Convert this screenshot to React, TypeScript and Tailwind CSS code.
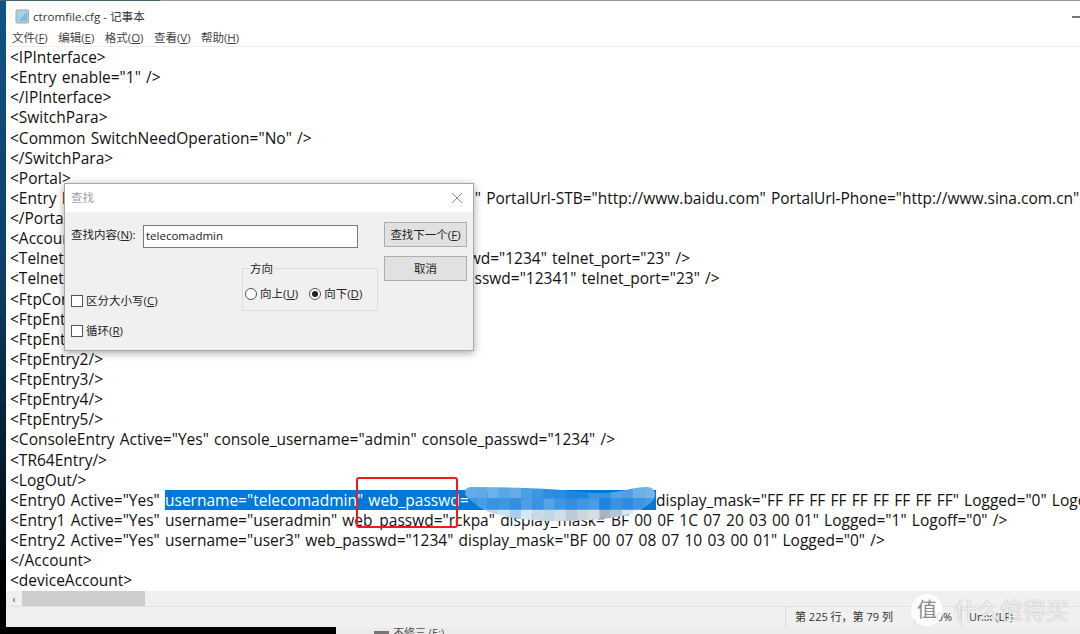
const rows = [
  '<IPInterface>',
  '<Entry enable="1" />',
  '</IPInterface>',
  '<SwitchPara>',
  '<Common SwitchNeedOperation="No" />',
  '</SwitchPara>',
  '<Portal>',
  '<Entry Enable="1" PortalUrl-Computer="http://www.sina.com.cn" PortalUrl-STB="http://www.baidu.com" PortalUrl-Phone="http://www.sina.com.cn" />',
  '</Portal>',
  '<Account>',
  '<TelnetEntry Active="Yes" telnet_username="roots" telnet_passwd="1234" telnet_port="23" />',
  '<TelnetEntry1 Active="Yes" telnet_username="user12" telnet_passwd="12341" telnet_port="23" />',
  '<FtpConfig />',
  '<FtpEntry0 />',
  '<FtpEntry1 />',
  '<FtpEntry2/>',
  '<FtpEntry3/>',
  '<FtpEntry4/>',
  '<FtpEntry5/>',
  '<ConsoleEntry Active="Yes" console_username="admin" console_passwd="1234" />',
  '<TR64Entry/>',
  '<LogOut/>',
];

// 打码的马赛克色块，每格 11px
const mosaic = [
  ['#63ace7', '#5fa9e6', '#6cb1e9', '#5aa7e6', '#66ade8', '#4c9fe5', '#3f97e3', '#2d8de0', '#2a8be0', '#1f84de', '#1f84de', '#3e96e3', '#3a93e2', '#55a3e6', '#4f9fe5', '#6db0e8', '#74b4e9'],
  ['#3d96e3', '#4a9de4', '#3a93e2', '#3f97e3', '#348fe1', '#4d9fe5', '#3a93e2', '#55a4e6', '#3f97e3', '#348fe1', '#3f97e3', '#4a9ce4', '#1f84de', '#3a93e2', '#2d8de0', '#3e96e3', '#4a9de4'],
  ['#e4eff8', '#c4dcf0', '#bcd8ef', '#cfe3f3', '#a9cdec', '#d5e6f5', '#c9d9e6', '#c2d5e4', '#d0dce6', '#bccad6', '#cad6e0', '#d6dfe7', '#a9b4c2', '#b2c6d8', '#dbe6ef', '#eef3f7', '#f8fafc'],
];

const Menu = ({ label, k }: { label: string; k: string }) => (
  <span>
    {label}(<span className="underline">{k}</span>)
  </span>
);

function FindDialog() {
  return (
    <div className="absolute left-[64px] top-[183px] flex h-[168px] w-[410px] flex-col border border-[#a8a8a8] bg-[#f0f0f0] text-[11.5px] text-[#222] shadow-[0_2px_8px_rgba(0,0,0,0.35)]">
      <div className="flex h-[28px] items-center justify-between bg-white pl-[6px] pr-[10px] text-[#a0a0a0]">
        <span>查找</span>
        <svg width="12" height="12" viewBox="0 0 12 12" stroke="#8c8c8c" strokeWidth="1">
          <path d="M1 1l10 10M11 1L1 11" />
        </svg>
      </div>
      <div className="relative flex-1">
        <span className="absolute left-[6px] top-[14px]">
          查找内容(<span className="underline">N</span>):
        </span>
        <div className="absolute left-[78px] top-[13px] flex h-[23px] w-[215px] items-center border border-[#7a7a7a] bg-white px-[2px] pb-[2px]">
          telecomadmin
        </div>
        <button className="absolute left-[319px] top-[10px] h-[25px] w-[83px] border border-[#adadad] bg-[#e1e1e1]">
          查找下一个(<span className="underline">F</span>)
        </button>
        <button className="absolute left-[319px] top-[44px] h-[25px] w-[83px] border border-[#adadad] bg-[#e1e1e1]">
          取消
        </button>
        <fieldset className="absolute left-[177px] top-[56px] h-[43px] w-[136px] border border-[#dcdcdc]" />
        <span className="absolute left-[184px] top-[48px] bg-[#f0f0f0] px-[1px]">方向</span>
        <div className="absolute left-[180px] top-[73px] flex items-center gap-[3px]">
          <span className="h-[12px] w-[12px] rounded-full border border-[#555] bg-white" />
          <span>
            向上(<span className="underline">U</span>)
          </span>
          <span className="ml-[8px] flex h-[12px] w-[12px] items-center justify-center rounded-full border border-[#555] bg-white">
            <span className="h-[6px] w-[6px] rounded-full bg-[#222]" />
          </span>
          <span>
            向下(<span className="underline">D</span>)
          </span>
        </div>
        <div className="absolute left-[6px] top-[80px] flex items-center gap-[3px]">
          <span className="h-[12px] w-[12px] border border-[#555] bg-white" />
          <span>
            区分大小写(<span className="underline">C</span>)
          </span>
        </div>
        <div className="absolute left-[6px] top-[110px] flex items-center gap-[3px]">
          <span className="h-[12px] w-[12px] border border-[#555] bg-white" />
          <span>
            循环(<span className="underline">R</span>)
          </span>
        </div>
      </div>
    </div>
  );
}

export default function App() {
  return (
    <div className="relative flex h-[634px] w-[1080px] overflow-hidden bg-black font-['Open_Sans','Noto_Sans_CJK_SC',sans-serif]">
      <div className="h-[560px] w-[6px] shrink-0 bg-gradient-to-b from-[#0f5488] via-[#0c3f66] to-[#020a10]" />
      <div className="flex h-[627px] min-w-0 flex-1 flex-col border-t border-[#999] bg-white">
        <div className="flex h-[29px] shrink-0 items-center gap-[3px] pl-[9px] pt-[2px] text-[11.6px] text-[#333]">
          <svg width="15" height="15" viewBox="0 0 15 15">
            <rect x="1" y="1" width="12.5" height="13" rx="1" fill="#a3d2e4" stroke="#a5a5a5" />
            <path d="M3 12L12 3v9z" fill="#7fbcd6" />
          </svg>
          <span>ctromfile.cfg - 记事本</span>
          <div className="ml-auto h-[2px] w-[8px] bg-[#777]" />
        </div>
        <div className="flex h-[17px] shrink-0 items-center gap-[10.4px] border-b border-[#eee] pl-[6px] text-[11.5px] text-[#444]">
          <Menu label="文件" k="F" />
          <Menu label="编辑" k="E" />
          <Menu label="格式" k="O" />
          <Menu label="查看" k="V" />
          <Menu label="帮助" k="H" />
        </div>
        <div className="min-h-0 flex-1 overflow-hidden whitespace-nowrap pl-[4px] text-[15.5px] leading-[20.13px] text-[#111] [word-spacing:1.2px]">
          {rows.map((r) => (
            <div key={r} className="h-[20.13px]">{r}</div>
          ))}
          <div className="h-[20.13px]">
            {'<Entry0 Active="Yes" '}
            <span className="inline-block w-[491px] overflow-hidden bg-[#0078d7] align-top text-white">{'username="telecomadmin" web_passwd="'}</span>
            {'display_mask="FF FF FF FF FF FF FF FF FF" Logged="0" Logoff="0" />'}
          </div>
          <div className="h-[20.13px]">{'<Entry1 Active="Yes" username="useradmin" web_passwd="rckpa" display_mask="BF 00 0F 1C 07 20 03 00 01" Logged="1" Logoff="0" />'}</div>
          <div className="h-[20.13px]">{'<Entry2 Active="Yes" username="user3" web_passwd="1234" display_mask="BF 00 07 08 07 10 03 00 01" Logged="0" />'}</div>
          <div className="h-[20.13px]">{'</Account>'}</div>
          <div className="h-[20.13px]">{'<deviceAccount>'}</div>
        </div>
        <div className="flex h-[15px] shrink-0 items-center bg-[#f0f0f0]">
          <span className="w-[16px] text-center text-[11px] leading-none text-[#555]">‹</span>
          <div className="h-full w-[123px] bg-[#cdcdcd]" />
        </div>
        <div className="flex h-[21px] shrink-0 items-center border-t border-[#e2e2e2] bg-[#f0f0f0] text-[11px] text-[#333]">
          <div className="ml-[779px] flex h-full w-[129px] items-center border-l border-[#dcdcdc] pl-[9px]">第 225 行，第 79 列</div>
          <div className="flex h-full w-[47px] items-center justify-center border-l border-[#dcdcdc]">100%</div>
          <div className="flex h-full flex-1 items-center border-l border-[#dcdcdc] pl-[7px]">Unix (LF)</div>
        </div>
      </div>
      <div className="absolute left-0 top-0 h-[1px] w-[160px] bg-[#41606e]" />

      {/* 打码 */}
      <svg className="absolute left-[465px] top-[487px] blur-[0.6px]" width="190" height="34" viewBox="0 0 190 34">
        <defs>
          <clipPath id="blob">
            <path d="M6 0C50 0 100 2 128 6C150 8 165 0 182 0Q190 0 190 8Q190 14 180 20C170 30 130 34 90 34C50 34 22 26 14 20Q0 10 0 6Q0 0 6 0Z" />
          </clipPath>
        </defs>
        <g clipPath="url(#blob)">
          {mosaic.map((row, y) =>
            row.map((c, x) => <rect key={`${x}-${y}`} x={x * 11.2} y={y * 11.4} width="11.4" height="11.6" fill={c} />),
          )}
        </g>
      </svg>
      <div className="absolute left-[356px] top-[477px] h-[51px] w-[102px] rounded-[3px] border-[2px] border-[#ee1c1c]" />

      <FindDialog />

      <div className="absolute left-[336px] top-[627px] flex h-[7px] w-[744px] items-start gap-[4px] overflow-hidden bg-[#ececec] pl-[38px] text-[11px] leading-[10px] text-[#555]">
        <span className="mt-[4px] h-[3px] w-[15px] bg-[#777]" />
        <span className="mt-[1px]">不修三 (E:)</span>
      </div>
      <div className="absolute left-[911px] top-[594px] flex h-[32px] w-[32px] items-center justify-center rounded-full bg-white/90 text-[20px] text-[#8a8a8a]">值</div>
      <div className="absolute left-[954px] top-[595px] text-[23px] leading-[30px] text-white/85 [text-shadow:0_0_1px_rgba(110,110,110,0.8)]">什么值得买</div>
    </div>
  );
}
